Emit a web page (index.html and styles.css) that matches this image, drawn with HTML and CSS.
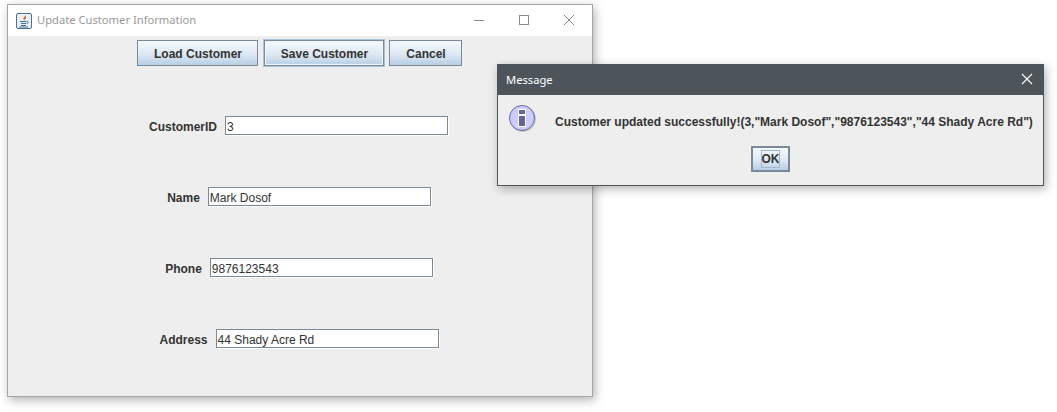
FILE: index.html
```html
<!DOCTYPE html>
<html>
<head>
    <meta charset="utf-8">
    <title>Update Customer Information</title>
    <link rel="stylesheet" href="styles.css">
</head>
<body>
<div class="window main-window">
    <div class="titlebar">
        <svg class="java-icon" width="16" height="16" viewBox="0 0 16 16">
            <rect x="0.5" y="0.5" width="15" height="15" rx="1.5" fill="#e8eff6" stroke="#4f6f8f"/>
            <path d="M9 2c.8 1.600-2 2.500-1.500 4.200.2.600.6.900.9 1.300-.2-1.200 2-2 1.600-3.600C9.800 3 9.500 2.500 9 2z" fill="#e0601e"/>
            <path d="M4 8.500h6.500M5 10.500h5M5 12.500h5M3 14h9" stroke="#3f6f9f" fill="none"/>
            <path d="M11 8.500c1.800-.3 1.800 1.800-.5 2.200" stroke="#3f6f9f" fill="none"/>
        </svg>
        <span class="title">Update Customer Information</span>
        <div class="controls">
            <svg width="16" height="16" viewBox="0 0 16 16"><path d="M3 8.500h10" stroke="#8a8a8a"/></svg>
            <svg width="16" height="16" viewBox="0 0 16 16"><rect x="3.500" y="3.500" width="9" height="9" fill="none" stroke="#8a8a8a"/></svg>
            <svg width="16" height="16" viewBox="0 0 16 16"><path d="M3 3l10 10M13 3L3 13" stroke="#8a8a8a"/></svg>
        </div>
    </div>
    <div class="content">
        <div class="toolbar">
            <button class="btn load-btn">Load Customer</button>
            <button class="btn save-btn">Save Customer</button>
            <button class="btn cancel-btn">Cancel</button>
        </div>
        <div class="form">
            <div class="row id-row"><label>CustomerID</label><div class="field">3</div></div>
            <div class="row"><label>Name</label><div class="field">Mark Dosof</div></div>
            <div class="row"><label>Phone</label><div class="field">9876123543</div></div>
            <div class="row"><label>Address</label><div class="field">44 Shady Acre Rd</div></div>
        </div>
    </div>
</div>

<div class="window dialog">
    <div class="dialog-title">
        <span>Message</span>
        <svg width="12" height="12" viewBox="0 0 12 12"><path d="M1 1l10 10M11 1L1 11" stroke="#fff" stroke-width="1.100"/></svg>
    </div>
    <div class="dialog-body">
        <div class="message">
            <svg class="info-icon" width="30" height="30" viewBox="0 0 30 30">
                <circle cx="15" cy="15" r="13" fill="#000" opacity="0.15"/>
                <circle cx="14" cy="14" r="12.500" fill="#ccccff" stroke="#666699"/>
                <rect x="10.500" y="5.500" width="7" height="5" fill="#666699" stroke="#fff"/>
                <rect x="10.500" y="11.500" width="7" height="11" fill="#666699" stroke="#fff"/>
            </svg>
            <span class="message-text">Customer updated successfully!(3,"Mark Dosof","9876123543","44 Shady Acre Rd")</span>
        </div>
        <button class="btn ok-btn"><span>OK</span></button>
    </div>
</div>
</body>
</html>
```

FILE: styles.css
```css
body {
    margin: 0;
    width: 1057px;
    height: 412px;
    overflow: hidden;
    position: relative;
    background-color: #fff;
    font-family: "Liberation Sans", Arial, sans-serif;
    font-size: 12px;
    color: #333;
}
.window {
    position: absolute;
    box-sizing: border-box;
    box-shadow: 2px 3px 9px rgba(0, 0, 0, 0.3);
}
.main-window {
    left: 7px;
    top: 4px;
    width: 586px;
    height: 393px;
    border: 1px solid #a5a5a5;
    display: flex;
    flex-direction: column;
}
.titlebar {
    height: 31px;
    flex: none;
    background-color: #fff;
    display: flex;
    align-items: center;
    padding-left: 8px;
}
.java-icon {
    margin-right: 5px;
}
.title {
    font-family: "Noto Sans", sans-serif;
    font-size: 11.2px;
    color: #999;
    margin-top: -2px;
}
.controls {
    margin-left: auto;
    display: flex;
    gap: 29px;
    padding-right: 15px;
    margin-top: -2px;
}
.content {
    flex: 1;
    background-color: #eee;
    display: flex;
    flex-direction: column;
}
.toolbar {
    display: flex;
    justify-content: center;
    gap: 6px;
    padding-top: 4px;
    padding-right: 2px;
    height: 26px;
}
.btn {
    box-sizing: border-box;
    height: 26px;
    padding: 2px 0 0 2px;
    border: 1px solid #7a8a99;
    background: linear-gradient(#f6f9fc, #dde8f3 55%, #b8cfe5);
    font-family: "Liberation Sans", Arial, sans-serif;
    font-size: 12px;
    font-weight: bold;
    color: #333;
}
.load-btn {
    width: 121px;
}
.save-btn {
    width: 120px;
    box-shadow: inset 0 0 0 1px #f0f5fa;
    outline: 1px solid #a9c3dc;
    margin-right: -1px;
}
.cancel-btn {
    width: 73px;
}
.form {
    margin-top: 24px;
    display: grid;
    grid-auto-rows: 71px;
}
.row {
    display: flex;
    align-items: center;
    justify-content: center;
    gap: 8px;
    padding-right: 2px;
}
.id-row {
    padding-right: 3px;
}
.row label {
    font-weight: bold;
    padding-top: 3px;
}
.field {
    box-sizing: border-box;
    width: 223px;
    height: 19px;
    line-height: 21px;
    padding-left: 1px;
    background-color: #fff;
    border: 1px solid #7a8a99;
    box-shadow: 1px 1px 0 #fff;
}
.dialog {
    left: 497px;
    top: 64px;
    width: 547px;
    height: 122px;
    border: 1px solid #4d555b;
    display: flex;
    flex-direction: column;
}
.dialog-title {
    height: 30px;
    flex: none;
    background-color: #4d555b;
    color: #fff;
    display: flex;
    align-items: center;
    justify-content: space-between;
    padding: 0 10px 2px 8px;
    box-sizing: border-box;
    font-family: "Noto Sans", sans-serif;
    font-size: 11.2px;
}
.dialog-body {
    flex: 1;
    background-color: #eee;
    display: flex;
    flex-direction: column;
    align-items: center;
}
.message {
    align-self: stretch;
    display: flex;
    padding: 9px 0 0 10px;
    height: 44px;
    box-sizing: border-box;
}
.info-icon {
    flex: none;
}
.message-text {
    font-weight: bold;
    margin: 11px 0 0 17px;
    white-space: nowrap;
}
.ok-btn {
    width: 39px;
    height: 26px;
    margin: 7px 0 0 0;
    padding: 0;
    border: 2px solid #7a8a99;
    display: flex;
    align-items: center;
    justify-content: center;
}
.ok-btn span {
    box-sizing: border-box;
    width: 19px;
    height: 18px;
    line-height: 18px;
    outline: 1px solid #a3b8cc;
    outline-offset: -1px;
}
```
